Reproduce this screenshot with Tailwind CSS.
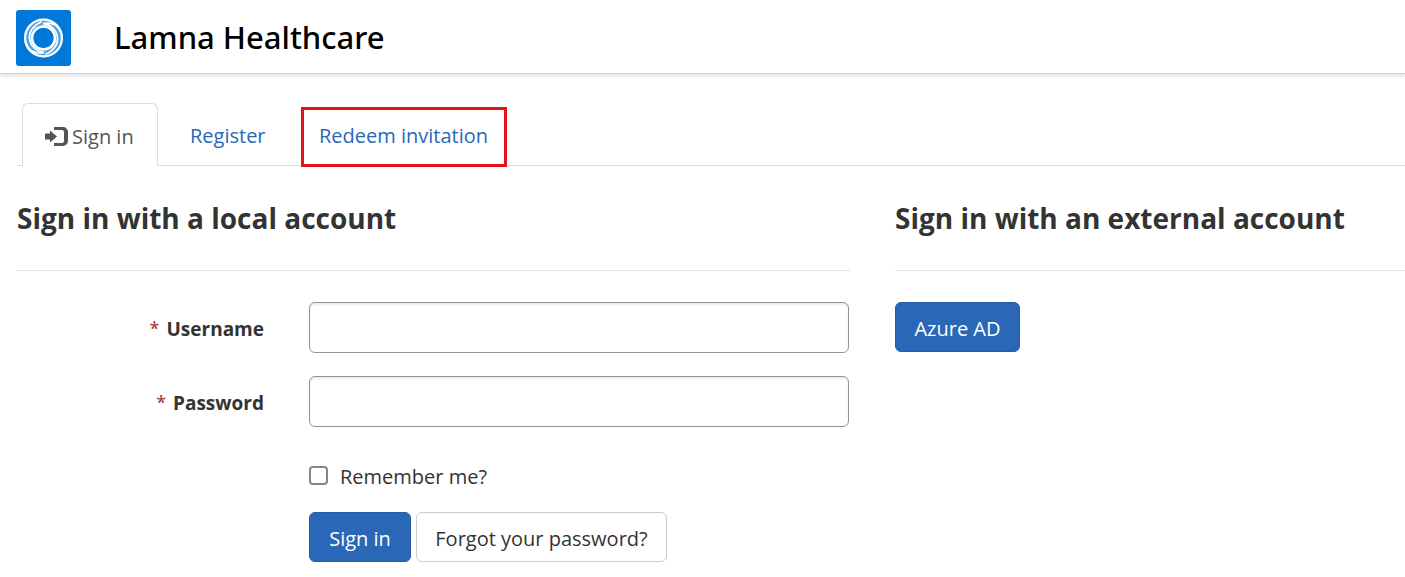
<!DOCTYPE html>
<html lang="en">
<head>
<meta charset="utf-8">
<meta name="viewport" content="width=device-width, initial-scale=1">
<title>Lamna Healthcare</title>
<script src="https://cdn.jsdelivr.net/npm/@tailwindcss/browser@4"></script>
</head>
<body class="bg-white font-['Open_Sans','Noto_Sans',sans-serif] text-[20px] leading-[30px] text-[#333333] overflow-x-hidden">
<header class="flex h-[74px] items-center gap-[42px] border-b border-[#d2d2d2] pl-4 pt-[3px] shadow-[0_2px_4px_rgba(0,0,0,0.13)]">
  <svg class="size-14 shrink-0" viewBox="0 0 56 56" fill="none" aria-hidden="true">
    <rect width="55" height="56" rx="3" fill="#0078d9"/>
    <circle cx="27.500" cy="28" r="15" stroke="#fff" stroke-width="9" stroke-opacity=".3"/>
    <g stroke="#fff" stroke-linecap="round">
      <circle cx="27.500" cy="28" r="18.400" stroke-width="2.200"/>
      <circle cx="27.500" cy="28" r="11.500" stroke-width="2.600"/>
      <path d="M11 35C13 41 20 44 28 42.500C20 41 14 36 13.500 28C13 21 18 15 25 12" stroke-width="1.800"/>
      <path d="M44 21C42 15 35 12 27 13.500C35 15 41 20 41.500 28C42 35 37 41 30 44" stroke-width="1.800"/>
    </g>
  </svg>
  <h1 class="pb-0.5 font-['Noto_Sans','Open_Sans',sans-serif] text-[31px] leading-10 font-medium text-black">Lamna Healthcare</h1>
</header>
<main class="pl-[17px] pt-[29px]">
  <nav class="flex h-[63px] items-stretch border-b border-[#dddddd] pl-[5px]">
    <a href="#signin" aria-current="page" class="-mb-px flex w-[136px] items-center gap-1 rounded-t-md border border-b-0 border-[#dddddd] bg-white pl-[22px] pt-1 text-[#555555]">
      <svg class="h-5 w-[23px] shrink-0" viewBox="0 0 23 20" fill="#555" aria-hidden="true">
        <path d="M0 6.500h5V3.500L12 9.500L5 15.500v-3H0Z"/>
        <path d="M9 0h9a5 5 0 0 1 5 5v9a5 5 0 0 1-5 5H9v-3h8a2 2 0 0 0 2-2V5a2 2 0 0 0-2-2H9Z"/>
      </svg>Sign in</a>
    <a href="#register" class="flex items-center px-8 pt-1 text-[#2a67b7]">Register</a>
    <a href="#redeem" class="ml-[3px] -mb-0.5 mt-1 flex w-[206px] items-center justify-center border-3 border-[#e31519] pb-0.5 text-[#2a67b7]">Redeem invitation</a>
  </nav>
  <div class="grid grid-cols-[833fr_510fr] gap-[45px] pt-8">
    <section>
      <h2 class="border-b border-[#e5e5e5] pb-8 text-[28px] leading-10 font-bold">Sign in with a local account</h2>
      <form class="grid grid-cols-[247fr_540fr] gap-x-[45px] pr-px pt-[31px]">
        <label for="username" class="flex items-start justify-end gap-[7px] pt-3 text-[19px] font-bold"><span class="text-[18px] leading-7 font-semibold text-[#a94442]">*</span>Username</label>
        <input id="username" type="text" class="mb-[23px] h-[51px] w-full rounded-md border border-[#949494] px-4 shadow-[inset_0_2px_2px_rgba(0,0,0,0.075)]">
        <label for="password" class="flex items-start justify-end gap-[7px] pt-3 text-[19px] font-bold"><span class="text-[18px] leading-7 font-semibold text-[#a94442]">*</span>Password</label>
        <input id="password" type="password" class="h-[51px] w-full rounded-md border border-[#949494] px-4 shadow-[inset_0_2px_2px_rgba(0,0,0,0.075)]">
        <div class="col-start-2 flex items-center gap-3 pt-[34px]">
          <span class="flex h-[30px] items-start pt-1"><input id="remember" type="checkbox" class="size-[19px] appearance-none rounded-sm border-2 border-[#858585] bg-white checked:bg-[#2a67b7]"></span>
          <label for="remember" class="pt-px">Remember me?</label>
        </div>
        <div class="col-start-2 flex gap-[5px] pt-5">
          <button type="submit" class="h-[50px] w-[102px] rounded-md border border-[#255ca3] bg-[#2a67b7] pt-1 text-white">Sign in</button>
          <button type="button" class="h-[50px] w-[251px] rounded-md border border-[#cccccc] bg-white pt-1">Forgot your password?</button>
        </div>
      </form>
    </section>
    <section>
      <h2 class="border-b border-[#e5e5e5] pb-8 text-[28px] leading-10 font-bold">Sign in with an external account</h2>
      <button type="button" class="mt-[31px] h-[50px] w-[125px] rounded-md border border-[#255ca3] bg-[#2a67b7] pt-1 text-white">Azure AD</button>
    </section>
  </div>
</main>
</body>
</html>
